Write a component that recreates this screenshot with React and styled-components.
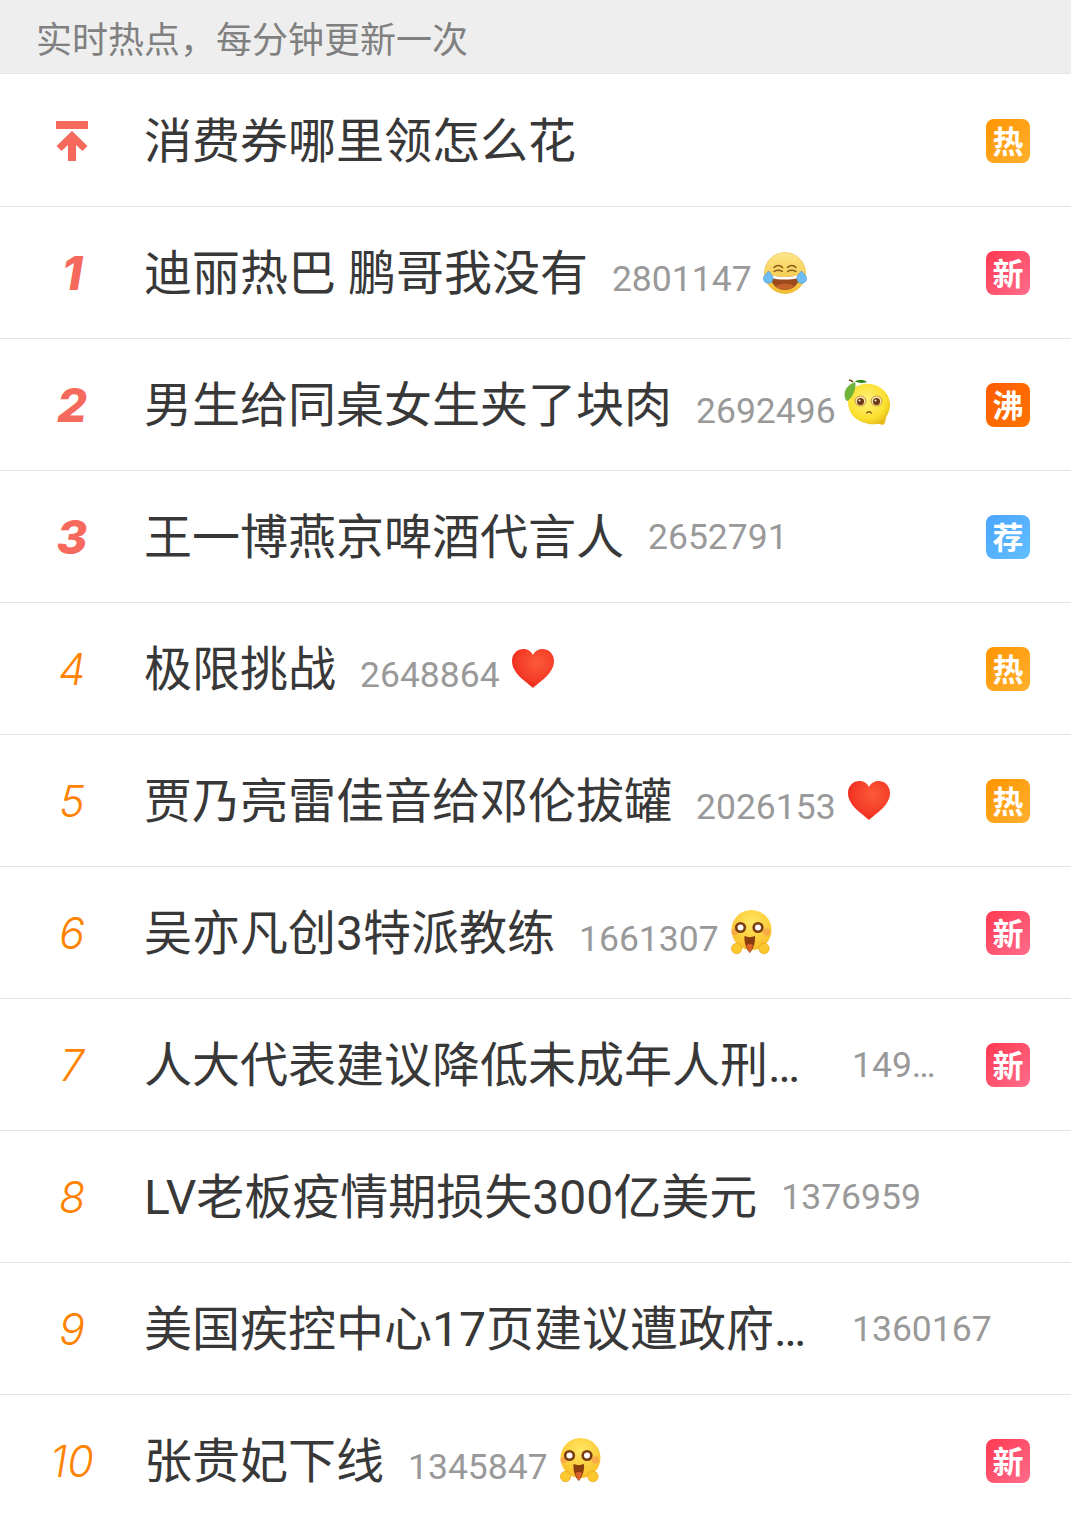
import styled, { createGlobalStyle } from 'styled-components';

const GlobalStyle = createGlobalStyle`
html, body {
    margin: 0;
    padding: 0;
    background: #fff;
}
#root {
    height: 100vh;
    overflow: hidden;
}
`

const FONT = `Roboto, "Noto Sans CJK SC", sans-serif`;

const BADGES = {
    hot: { label: '热', from: '#ff9500', to: '#ffb030' },
    fresh: { label: '新', from: '#ff3850', to: '#ff6d8c' },
    boil: { label: '沸', from: '#ff5c00', to: '#ff7400' },
    pick: { label: '荐', from: '#4aa4ff', to: '#62bfff' },
};

const ITEMS = [
    { rank: 'top', title: '消费券哪里领怎么花', badge: 'hot' },
    { rank: 1, title: '迪丽热巴 鹏哥我没有', count: '2801147', emoji: 'laugh', badge: 'fresh' },
    { rank: 2, title: '男生给同桌女生夹了块肉', count: '2692496', emoji: 'lemon', badge: 'boil' },
    { rank: 3, title: '王一博燕京啤酒代言人', count: '2652791', badge: 'pick' },
    { rank: 4, title: '极限挑战', count: '2648864', emoji: 'heart', badge: 'hot' },
    { rank: 5, title: '贾乃亮雷佳音给邓伦拔罐', count: '2026153', emoji: 'heart', badge: 'hot' },
    { rank: 6, title: '吴亦凡创3特派教练', count: '1661307', emoji: 'wow', badge: 'fresh' },
    { rank: 7, title: '人大代表建议降低未成年人刑事责任年龄', count: '1497283', badge: 'fresh' },
    { rank: 8, title: 'LV老板疫情期损失300亿美元', count: '1376959' },
    { rank: 9, title: '美国疾控中心17页建议遭政府雪藏', count: '1360167' },
    { rank: 10, title: '张贵妃下线', count: '1345847', emoji: 'wow', badge: 'fresh' },
];

function PinIcon() {
    return (
        <svg width="32" height="40" viewBox="0 0 32 40">
            <rect x="0" y="0" width="32" height="8" fill="#f6695d" />
            <polygon
                points="16,10 31.5,25 26.5,30 20,24 20,40 12,40 12,24 5.5,30 0.5,25"
                fill="#f6695d"
            />
        </svg>
    );
}

function LaughEmoji() {
    return (
        <svg width="44" height="44" viewBox="0 0 44 44">
            <defs>
                <linearGradient id="laughFace" x1="0" y1="0" x2="0" y2="1">
                    <stop offset="0" stopColor="#fde68a" />
                    <stop offset="1" stopColor="#f3bd2e" />
                </linearGradient>
            </defs>
            <circle cx="22" cy="22" r="20.5" fill="url(#laughFace)" stroke="#e8b93f" strokeWidth="0.6" />
            <path d="M11 16.500c2.500-2.500 6-2.500 8.500 0M24.500 16.500c2.500-2.500 6-2.500 8.500 0" fill="none" stroke="#8a5a1c" strokeWidth="1.6" strokeLinecap="round" />
            <path d="M11 20.500c2.500-1.500 6-1.500 8.500 0M24.500 20.500c2.500-1.500 6-1.500 8.500 0" fill="none" stroke="#8a5a1c" strokeWidth="1.4" strokeLinecap="round" />
            <path d="M7 24c10 2.500 20 2.500 30 0-.4 9-7.400 15-15 15S7.400 33 7 24z" fill="#9a4a1c" />
            <path d="M7.500 24c10 2.500 19 2.500 29 0l-.6 3c-9 2-19 2-28 0z" fill="#fff" />
            <path d="M13 35c5-3.500 13-3.500 18 0-5 5-13 5-18 0z" fill="#c4622a" />
            <path d="M5.500 20c2.500 3 4.800 5 4.500 8.500-.3 2.800-3 4.200-5.500 3.700C1.500 31.600 0 29 .6 26.500c.6-2.200 3-4 4.900-6.500z" fill="#6fbdf5" stroke="#3f8fd6" strokeWidth="0.6" />
            <path d="M38.500 20c-2.500 3-4.800 5-4.500 8.500.3 2.800 3 4.200 5.500 3.700 3-.6 4.500-3.200 3.900-5.700-.6-2.200-3-4-4.900-6.500z" fill="#6fbdf5" stroke="#3f8fd6" strokeWidth="0.6" />
        </svg>
    );
}

function LemonEmoji() {
    return (
        <svg width="44" height="44" viewBox="0 0 44 44" overflow="visible">
            <defs>
                <radialGradient id="lemonSkin" cx="0.45" cy="0.4" r="0.65">
                    <stop offset="0" stopColor="#fff27a" />
                    <stop offset="0.7" stopColor="#fae02e" />
                    <stop offset="1" stopColor="#e6b816" />
                </radialGradient>
            </defs>
            <path d="M3 9C9 1 19-1 28 2c9 3 15 11 15 20 0 6-3 10-4 13-.7 2-.5 5-2.500 6.500-1.500 1-3.500-1-6-.8-3 .3-5 1-8.500.3C12 39 5 34 2.500 27 .5 21 .5 14 3 9z" fill="url(#lemonSkin)" />
            <path d="M8-1.500C11-3.500 17-3.500 20-1 16 .5 11 0 8-1.500z" fill="#2f8a14" />
            <path d="M2-3c1.500 0 3 1 4 2" fill="none" stroke="#6b3f10" strokeWidth="1.400" />
            <path d="M8-.5C9 5 6 14 0 18-4 13-3 3 8-.5z" fill="#6fb53a" stroke="#4b9420" strokeWidth="0.4" />
            <ellipse cx="13.500" cy="18" rx="5.500" ry="5" fill="#f6e7b0" stroke="#b9822a" strokeWidth="0.8" />
            <ellipse cx="29.500" cy="18" rx="5.500" ry="5" fill="#f6e7b0" stroke="#b9822a" strokeWidth="0.8" />
            <circle cx="13.500" cy="18.500" r="3.500" fill="#6b3510" />
            <circle cx="29.500" cy="18.500" r="3.500" fill="#6b3510" />
            <circle cx="12.500" cy="17.500" r="1" fill="#fff" />
            <circle cx="28.500" cy="17.500" r="1" fill="#fff" />
            <path d="M19.500 30c1.500-1.500 3.500-1.500 5 0" fill="none" stroke="#8a5a1c" strokeWidth="1.200" strokeLinecap="round" />
        </svg>
    );
}

function HeartEmoji() {
    return (
        <svg width="44" height="44" viewBox="0 0 44 44">
            <defs>
                <radialGradient id="heartFill" cx="0.6" cy="0.35" r="0.7">
                    <stop offset="0" stopColor="#fb5a3a" />
                    <stop offset="0.7" stopColor="#f43a26" />
                    <stop offset="1" stopColor="#e8241a" />
                </radialGradient>
            </defs>
            <path d="M22 41C16 35 1 27 1 14 1 6.500 6.500 2 12.500 2c4.500 0 7.700 2.500 9.500 6 1.800-3.500 5-6 9.500-6C37.500 2 43 6.500 43 14c0 13-15 21-21 27z" fill="url(#heartFill)" />
        </svg>
    );
}

function WowEmoji() {
    return (
        <svg width="44" height="46" viewBox="0 0 44 46">
            <defs>
                <radialGradient id="wowFace" cx="0.5" cy="0.3" r="0.75">
                    <stop offset="0" stopColor="#ffe762" />
                    <stop offset="1" stopColor="#f9bb22" />
                </radialGradient>
            </defs>
            <circle cx="21.500" cy="20" r="20" fill="url(#wowFace)" />
            <circle cx="36.500" cy="22" r="3.800" fill="#f79a4e" opacity="0.65" />
            <circle cx="4.500" cy="22" r="3.200" fill="#f79a4e" opacity="0.65" />
            <circle cx="10.500" cy="17.500" r="5.600" fill="#7a3d12" />
            <circle cx="28" cy="17.500" r="5.600" fill="#7a3d12" />
            <circle cx="10.500" cy="17.500" r="3" fill="#fff" />
            <circle cx="28" cy="17.500" r="3" fill="#fff" />
            <path d="M14.500 26c3.500 1.500 7 1.500 10.500 0 .5 6-1.500 13-5.200 17-3.800-4-5.800-11-5.300-17z" fill="#8a3d10" />
            <path d="M16.500 35c2-1.200 4.500-1.200 6.500 0-.7 3-1.800 5.500-3.200 8-1.500-2.500-2.600-5-3.300-8z" fill="#d9632a" />
            <circle cx="6.600" cy="38.500" r="5.200" fill="#fbc92e" stroke="#e29a18" strokeWidth="0.6" />
            <circle cx="34" cy="38.500" r="5.200" fill="#fbc92e" stroke="#e29a18" strokeWidth="0.6" />
        </svg>
    );
}

const EMOJIS = { laugh: LaughEmoji, lemon: LemonEmoji, heart: HeartEmoji, wow: WowEmoji };

function HotRow({ item }) {
    const Emoji = EMOJIS[item.emoji];
    const badge = BADGES[item.badge];
    // the count sits closer to an emoji than to a badge, and may run on when the row has neither
    const gap = Emoji ? 11 : badge ? 50 : 0;
    return (
        <Row>
            <Rank $top={item.rank <= 3}>
                {item.rank === 'top' ? <PinIcon /> : item.rank}
            </Rank>
            <Title>{item.title}</Title>
            {item.count && <Count $lowered={!!Emoji} $gap={gap}>{item.count}</Count>}
            {Emoji && <EmojiSlot><Emoji /></EmojiSlot>}
            {badge && <Badge $from={badge.from} $to={badge.to}>{badge.label}</Badge>}
        </Row>
    );
}

export default function App() {
    return (
        <>
            <GlobalStyle />
            <Page>
                <Notice>实时热点，每分钟更新一次</Notice>
                {ITEMS.map(item => <HotRow key={item.rank} item={item} />)}
            </Page>
        </>
    );
}

const Page = styled.div`
font-family: ${FONT};
background: #fff;
`
const Notice = styled.div`
box-sizing: border-box;
height: 74px;
margin-bottom: 1px;
padding: 0 36px;
display: flex;
align-items: center;
background: #eeeeee;
border-bottom: 1px solid #e6e6e6;
color: #808080;
font-size: 36px;
`
const Row = styled.div`
box-sizing: border-box;
height: 132px;
padding-right: 41px;
display: flex;
align-items: center;
border-bottom: 1px solid #e3e3e3;
`
const Rank = styled.div`
flex: 0 0 144px;
display: flex;
justify-content: center;
font-family: Inter, sans-serif;
font-size: ${props => props.$top ? 47 : 43}px;
font-style: italic;
font-weight: ${props => props.$top ? 800 : 300};
color: ${props => props.$top ? '#f6695d' : '#ff8200'};
`
const Title = styled.div`
flex: 0 0 auto;
max-width: 684px;
padding-top: 2px;
overflow: hidden;
white-space: nowrap;
text-overflow: ellipsis;
font-size: 48px;
line-height: 64px;
color: #383838;
`
const Count = styled.div`
flex: 0 1 auto;
min-width: 0;
margin: ${props => props.$lowered ? 13 : 0}px ${props => props.$gap}px 0 24px;
overflow: hidden;
white-space: nowrap;
text-overflow: ellipsis;
font-size: 35.5px;
color: #999;
`
const EmojiSlot = styled.div`
flex: 0 0 44px;
display: flex;
align-items: center;
justify-content: center;
`
const Badge = styled.div`
flex: 0 0 44px;
height: 44px;
margin-left: auto;
display: flex;
align-items: center;
justify-content: center;
padding-bottom: 2px;
box-sizing: border-box;
border-radius: 8px;
background: linear-gradient(135deg, ${props => props.$from}, ${props => props.$to});
color: #fff;
font-size: 31px;
font-weight: 700;
`
